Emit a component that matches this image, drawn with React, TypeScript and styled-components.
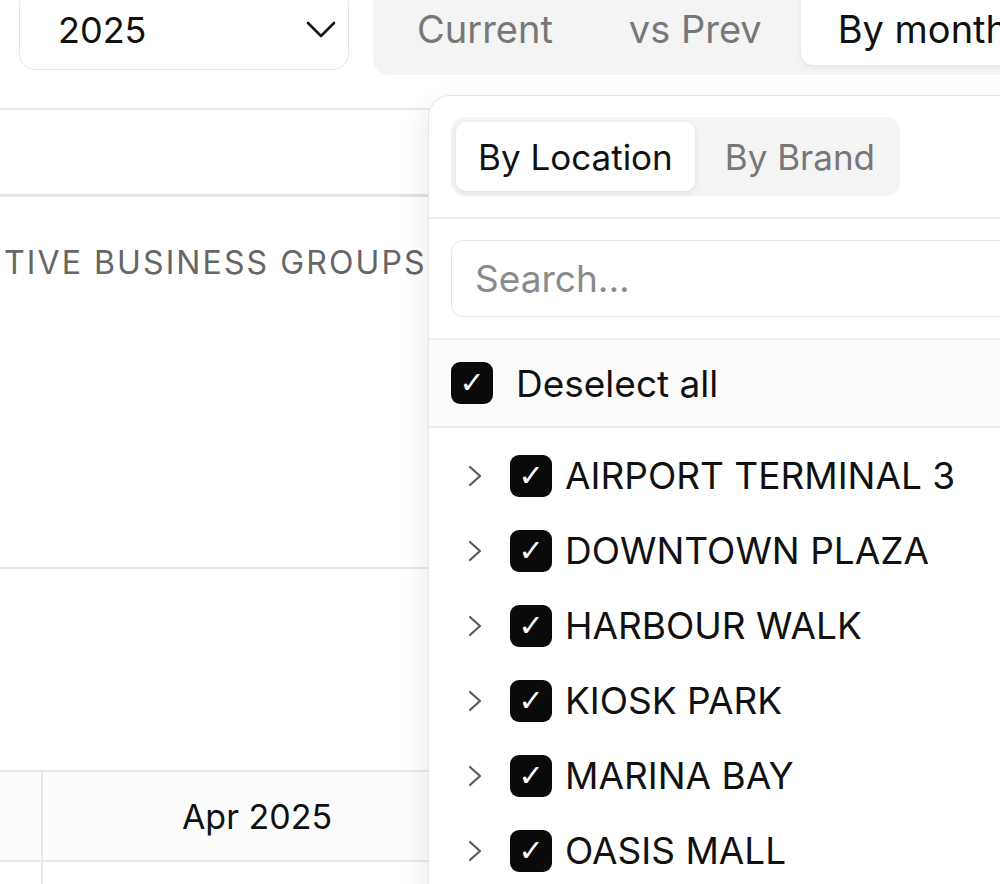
import React from 'react';
import styled, { createGlobalStyle } from 'styled-components';

const GlobalStyle = createGlobalStyle`
    html, body {
        margin: 0;
        padding: 0;
        background: #ffffff;
        font-family: Inter, "Noto Sans", "Liberation Sans", sans-serif;
        color: #111111;
    }
    * {
        box-sizing: border-box;
    }
`;

const Page = styled.div`
    position: relative;
    width: 1000px;
    height: 884px;
    overflow: hidden;
    background: #ffffff;
`;

const Toolbar = styled.div`
    display: flex;
    align-items: flex-start;
    gap: 24px;
    margin-top: -12px;
    padding-left: 19px;
`;

const YearSelect = styled.div`
    flex: 0 0 auto;
    display: flex;
    align-items: center;
    justify-content: space-between;
    width: 330px;
    height: 82px;
    padding: 2px 12px 0 38px;
    border: 1.5px solid #e6e6e6;
    border-radius: 16px;
    font-size: 36px;
    color: #111111;
`;

const Segmented = styled.div`
    flex: 0 0 auto;
    display: flex;
    gap: 2px;
    width: 700px;
    height: 87px;
    padding: 4px 7px 10px;
    background: #f4f4f4;
    border-radius: 16px;
`;

const SegTab = styled.div<{ active?: boolean }>`
    display: flex;
    align-items: center;
    padding: 0 37px;
    font-size: 38px;
    white-space: nowrap;
    border-radius: 12px;
    color: ${p => (p.active ? '#111111' : '#777777')};
    background: ${p => (p.active ? '#ffffff' : 'transparent')};
    box-shadow: ${p => (p.active ? '0 2px 6px rgba(0,0,0,0.08)' : 'none')};
`;

const Card = styled.div`
    margin-top: 33px;
    margin-left: -30px;
    width: 1100px;
    border: 2px solid #e8e8e8;
    border-radius: 16px;
`;

const CardHeader = styled.div`
    height: 87px;
    border-bottom: 3px solid #e4e4e4;
`;

const TitleSection = styled.div`
    height: 372px;
    padding: 46px 0 0 32px;
    border-bottom: 2px solid #e8e8e8;
`;

const SectionTitle = styled.div`
    font-size: 32px;
    line-height: 40px;
    letter-spacing: 2.1px;
    color: #666666;
    white-space: nowrap;
`;

const ChartArea = styled.div`
    height: 201px;
`;

const TableRow = styled.div<{ head?: boolean }>`
    display: grid;
    grid-template-columns: 71px 430px 1fr;
    height: ${p => (p.head ? '90px' : '110px')};
    border-top: 2px solid #e8e8e8;
    background: ${p => (p.head ? '#fcfcfc' : '#ffffff')};
`;

const TableCell = styled.div`
    display: flex;
    align-items: center;
    justify-content: center;
    font-size: 34px;
    color: #111111;
    border-right: 2px solid #e8e8e8;
`;

const Popover = styled.div`
    position: absolute;
    left: 428px;
    top: 95px;
    width: 660px;
    height: 840px;
    background: #ffffff;
    border: 1.5px solid #e5e5e5;
    border-radius: 22px;
    box-shadow: -6px 8px 28px rgba(0, 0, 0, 0.07);
    overflow: hidden;
`;

const PopSection = styled.div`
    padding: 21px 22px;
    border-bottom: 2px solid #ededed;
`;

const ModeGroup = styled.div`
    display: inline-flex;
    gap: 4px;
    height: 79px;
    padding: 5px;
    background: #f4f4f4;
    border-radius: 14px;
`;

const ModeTab = styled.div<{ active?: boolean }>`
    display: flex;
    align-items: center;
    padding: ${p => (p.active ? '0 22px' : '0 20px 0 26px')};
    font-size: 35px;
    white-space: nowrap;
    border-radius: 10px;
    color: ${p => (p.active ? '#111111' : '#777777')};
    background: ${p => (p.active ? '#ffffff' : 'transparent')};
    box-shadow: ${p => (p.active ? '0 2px 6px rgba(0,0,0,0.09)' : 'none')};
`;

const SearchInput = styled.input`
    display: block;
    width: 100%;
    height: 77px;
    padding: 0 23px;
    border: 1.5px solid #e6e6e6;
    border-radius: 12px;
    font-family: Inter, "Noto Sans", "Liberation Sans", sans-serif;
    font-size: 37px;
    color: #111111;
    outline: none;

    &::placeholder {
        color: #8b8b8b;
    }
`;

const DeselectRow = styled.div`
    display: flex;
    align-items: center;
    gap: 23px;
    height: 88px;
    padding-left: 22px;
    background: #fbfbfb;
    border-bottom: 2px solid #ececec;
    font-size: 37px;
    color: #111111;
`;

const CheckBox = styled.span`
    flex: 0 0 auto;
    display: flex;
    align-items: center;
    justify-content: center;
    width: 42px;
    height: 42px;
    border-radius: 9px;
    background: #0a0a0a;
    color: #ffffff;
    font-family: "DejaVu Sans", sans-serif;
    font-size: 30px;
    line-height: 1;
`;

const LocationList = styled.div`
    padding-top: 10px;
`;

const LocationRow = styled.div`
    display: flex;
    align-items: center;
    height: 75px;
    padding-left: 38px;
    font-size: 37px;
    color: #111111;
    white-space: nowrap;
`;

const Expander = styled.svg`
    flex: 0 0 auto;
    margin-right: 27px;
`;

const LocationName = styled.span`
    margin-left: 13px;
`;

const ChevronDown = () => (
    <svg width="30" height="18" viewBox="0 0 30 18" fill="none">
        <path d="M2 2 L15 15 L28 2" stroke="#111" strokeWidth="2.6" strokeLinecap="round" strokeLinejoin="round" />
    </svg>
);

const locations = [
    'AIRPORT TERMINAL 3',
    'DOWNTOWN PLAZA',
    'HARBOUR WALK',
    'KIOSK PARK',
    'MARINA BAY',
    'OASIS MALL',
];

const App: React.FC = () => {
    return (
        <>
            <GlobalStyle />
            <Page>
                <Toolbar>
                    <YearSelect>
                        <span>2025</span>
                        <ChevronDown />
                    </YearSelect>
                    <Segmented>
                        <SegTab>Current</SegTab>
                        <SegTab>vs Prev</SegTab>
                        <SegTab active>By month</SegTab>
                    </Segmented>
                </Toolbar>

                <Card>
                    <CardHeader />
                    <TitleSection>
                        <SectionTitle>TIVE BUSINESS GROUPS</SectionTitle>
                    </TitleSection>
                    <ChartArea />
                    <TableRow head>
                        <TableCell />
                        <TableCell>Apr 2025</TableCell>
                        <div />
                    </TableRow>
                    <TableRow>
                        <TableCell />
                        <TableCell />
                        <div />
                    </TableRow>
                </Card>

                {/* location filter dropdown, open over the report */}
                <Popover>
                    <PopSection>
                        <ModeGroup>
                            <ModeTab active>By Location</ModeTab>
                            <ModeTab>By Brand</ModeTab>
                        </ModeGroup>
                    </PopSection>
                    <PopSection>
                        <SearchInput placeholder="Search..." />
                    </PopSection>
                    <DeselectRow>
                        <CheckBox>✓</CheckBox>
                        <span>Deselect all</span>
                    </DeselectRow>
                    <LocationList>
                        {locations.map(name => (
                            <LocationRow key={name}>
                                <Expander width="16" height="24" viewBox="0 0 16 24" fill="none">
                                    <path d="M3 3 L13 12 L3 21" stroke="#5a5a5a" strokeWidth="2.2" strokeLinecap="round" strokeLinejoin="round" />
                                </Expander>
                                <CheckBox>✓</CheckBox>
                                <LocationName>{name}</LocationName>
                            </LocationRow>
                        ))}
                    </LocationList>
                </Popover>
            </Page>
        </>
    );
};

export default App;
